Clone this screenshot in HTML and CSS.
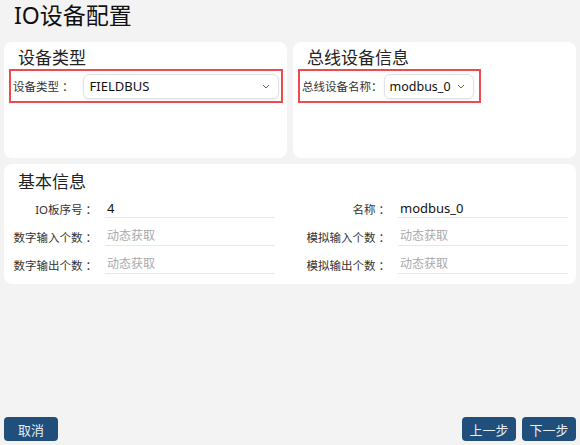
FILE: index.html
```html
<!DOCTYPE html>
<html>
<head lang="zh">
    <meta charset="UTF-8">
    <title>IO设备配置</title>
    <link rel="stylesheet" href="styles.css">
</head>
<body>
<div class="page">
    <h1 class="title">IO设备配置</h1>

    <div class="top">
        <div class="card">
            <h2 class="card-title">设备类型</h2>
            <div class="mark mark-wide">
                <span class="field-label">设备类型 ：</span>
                <div class="select select-grow">
                    <span>FIELDBUS</span>
                    <svg width="8" height="5" viewBox="0 0 8 5"><path d="M1 1 L4 4 L7 1" fill="none" stroke="#666" stroke-width="1"/></svg>
                </div>
            </div>
        </div>
        <div class="card">
            <h2 class="card-title">总线设备信息</h2>
            <div class="mark">
                <span class="field-label field-label-tight">总线设备名称：</span>
                <div class="select select-small">
                    <span>modbus_0</span>
                    <svg width="8" height="5" viewBox="0 0 8 5"><path d="M1 1 L4 4 L7 1" fill="none" stroke="#666" stroke-width="1"/></svg>
                </div>
            </div>
        </div>
    </div>

    <div class="card card-info">
        <h2 class="card-title">基本信息</h2>
        <div class="info-grid">
            <div class="row">
                <span class="row-label">IO板序号 ：</span>
                <span class="row-input">4</span>
            </div>
            <div class="row">
                <span class="row-label">名称 ：</span>
                <span class="row-input">modbus_0</span>
            </div>
            <div class="row">
                <span class="row-label">数字输入个数 ：</span>
                <span class="row-input empty">动态获取</span>
            </div>
            <div class="row">
                <span class="row-label">模拟输入个数 ：</span>
                <span class="row-input empty">动态获取</span>
            </div>
            <div class="row">
                <span class="row-label">数字输出个数 ：</span>
                <span class="row-input empty">动态获取</span>
            </div>
            <div class="row">
                <span class="row-label">模拟输出个数 ：</span>
                <span class="row-input empty">动态获取</span>
            </div>
        </div>
    </div>

    <div class="footer">
        <button class="btn">取消</button>
        <div class="footer-right">
            <button class="btn">上一步</button>
            <button class="btn">下一步</button>
        </div>
    </div>
</div>
</body>
</html>
```

FILE: styles.css
```css
* {
    margin: 0;
    padding: 0;
    box-sizing: border-box;
}

body {
    background-color: #f3f3f3;
    font-family: "Noto Sans", "Noto Sans CJK SC", sans-serif;
    color: #222;
}

.page {
    width: 580px;
    height: 445px;
    padding: 0 4px 4px 4px;
    display: flex;
    flex-direction: column;
}

.title {
    font-size: 23px;
    font-weight: normal;
    line-height: 30px;
    color: #111;
    margin: 0 0 12px 10px;
}

.top {
    display: grid;
    grid-template-columns: 1fr 1fr;
    gap: 6px;
}

.card {
    background-color: #fff;
    border-radius: 8px;
    height: 116px;
    padding-top: 5px;
}

.card-title {
    font-size: 17px;
    font-weight: normal;
    line-height: 22px;
    padding-left: 14px;
    color: #222;
}

/* 红色标注框 */
.mark {
    display: inline-flex;
    align-items: center;
    margin-left: 5px;
    height: 34px;
    padding: 0 5px 0 2px;
    border: 2px solid #ef4a4f;
}

.mark-wide {
    display: flex;
    margin-right: 4px;
    padding-right: 2px;
}

.field-label {
    font-size: 11.5px;
    color: #333;
    white-space: nowrap;
    margin-right: 5px;
}

.field-label-tight {
    margin-right: 1px;
}

.select {
    display: flex;
    align-items: center;
    justify-content: space-between;
    height: 25px;
    padding: 0 8px 0 6px;
    border: 1px solid #e2e2e2;
    border-radius: 6px;
    box-shadow: 0 1px 2px rgba(0, 0, 0, 0.08);
    font-size: 13px;
    color: #111;
}

.select-grow {
    flex: 1;
    margin-left: 4px;
}

.select-small {
    width: 90px;
    padding: 0 8px 0 5px;
    font-size: 12.5px;
}

.card-info {
    height: 120px;
    margin-top: 6px;
    padding-top: 7px;
}

.info-grid {
    display: grid;
    grid-template-columns: 293px 1fr;
    row-gap: 9px;
    margin-top: 6px;
}

.row {
    display: flex;
    align-items: center;
}

.row-label {
    width: 93px;
    text-align: right;
    font-size: 11.5px;
    color: #333;
    white-space: nowrap;
    margin-right: 8px;
}

.row-input {
    width: 170px;
    height: 19px;
    line-height: 18px;
    padding-left: 2px;
    border-bottom: 1px solid #e8e8e8;
    font-size: 13px;
    color: #111;
}

.row-input.empty {
    font-size: 12px;
    color: #aaa;
}

.footer {
    margin-top: auto;
    display: flex;
    justify-content: space-between;
}

.footer-right {
    display: flex;
    gap: 6px;
}

.btn {
    width: 54px;
    height: 24px;
    border: none;
    border-radius: 4px;
    background-color: #1f4f7a;
    color: #e6edf5;
    font-family: "Noto Sans CJK SC", sans-serif;
    font-size: 13px;
}
```
